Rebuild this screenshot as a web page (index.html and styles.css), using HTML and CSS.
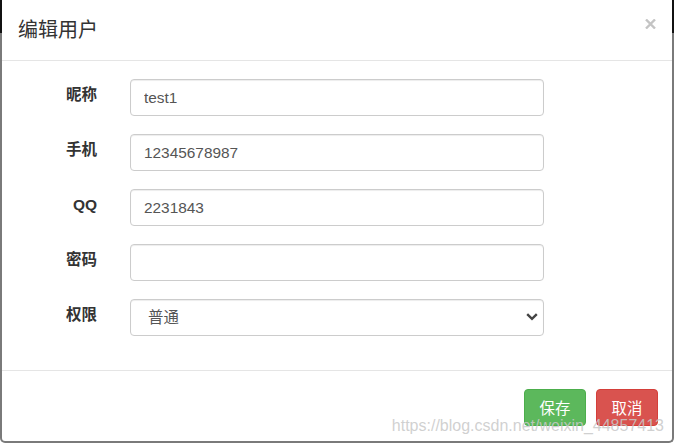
FILE: index.html
```html
<!DOCTYPE html>
<html lang="zh-CN">
<head>
<meta charset="utf-8">
<title>编辑用户</title>
<link rel="stylesheet" href="styles.css">
</head>
<body>
<div class="modal">
  <div class="modal-header">
    <h4 class="modal-title">编辑用户</h4>
    <span class="close" aria-label="Close">
      <svg width="11" height="10" viewBox="0 0 11 10"><path d="M1 0.5 L10 9.5 M10 0.5 L1 9.5" stroke="#c4c4c4" stroke-width="2.4" fill="none"/></svg>
    </span>
  </div>
  <form class="modal-body">
    <label class="label">昵称</label>
    <input class="control" type="text" value="test1">
    <label class="label">手机</label>
    <input class="control" type="text" value="12345678987">
    <label class="label">QQ</label>
    <input class="control" type="text" value="2231843">
    <label class="label">密码</label>
    <input class="control" type="password" value="">
    <label class="label">权限</label>
    <div class="select-wrap">
      <select class="control select">
        <option>普通</option>
        <option>管理员</option>
      </select>
      <svg class="chevron" width="12" height="8" viewBox="0 0 12 8"><path d="M1.2 1.2 L6 5.8 L10.8 1.2" stroke="#444" stroke-width="2.4" fill="none"/></svg>
    </div>
  </form>
  <div class="modal-footer">
    <button class="btn btn-success" type="button">保存</button>
    <button class="btn btn-danger" type="button">取消</button>
  </div>
  <div class="watermark">https://blog.csdn.net/weixin_44857413</div>
</div>
</body>
</html>
```

FILE: styles.css
```css
html, body {
  margin: 0;
  padding: 0;
  background: #fff;
}

body {
  width: 677px;
  height: 444px;
  overflow: hidden;
  font-family: "Liberation Sans", "Noto Sans CJK SC", sans-serif;
  color: #333;
}

.modal {
  position: relative;
  box-sizing: border-box;
  width: 674px;
  height: 443px;
  background: #fff;
  border: 2px solid #7a7a7a;
  border-top: none;
  border-radius: 0 0 5px 5px;
  display: flex;
  flex-direction: column;
}

.modal::before,
.modal::after {
  content: "";
  position: absolute;
  top: 0;
  width: 2px;
  height: 33px;
  background: #111;
}

.modal::before { left: -2px; }
.modal::after { right: -2px; }

.modal-header {
  height: 60px;
  border-bottom: 1px solid #e5e5e5;
  display: flex;
  align-items: center;
  justify-content: space-between;
  padding: 0 16px;
}

.modal-title {
  margin: 0;
  font-family: "Noto Sans CJK SC", sans-serif;
  font-weight: normal;
  font-size: 20px;
  line-height: 28px;
  color: #333;
  padding-bottom: 2px;
}

.close {
  display: flex;
  margin-bottom: 12px;
}

.modal-body {
  margin: 0;
  padding: 18px 0 34px 0;
  display: grid;
  grid-template-columns: 95px 414px;
  column-gap: 33px;
  row-gap: 18px;
  align-items: center;
}

.label {
  text-align: right;
  font-weight: bold;
  font-size: 15.5px;
  line-height: 22px;
  color: #333;
  padding-bottom: 5px;
}

.control {
  box-sizing: border-box;
  width: 414px;
  height: 37px;
  margin: 0;
  padding: 0 13px;
  border: 1px solid #ccc;
  border-radius: 4px;
  background: #fff;
  box-shadow: inset 0 1px 1px rgba(0, 0, 0, 0.075);
  font-family: "Liberation Sans", "Noto Sans CJK SC", sans-serif;
  font-size: 15.4px;
  color: #555;
  outline: none;
}

.select-wrap {
  position: relative;
  display: flex;
}

.select {
  appearance: none;
  -webkit-appearance: none;
  padding-left: 17px;
}

.chevron {
  position: absolute;
  right: 6px;
  top: 14px;
}

.modal-footer {
  flex: 1;
  border-top: 1px solid #e5e5e5;
  display: flex;
  justify-content: flex-end;
  align-items: flex-start;
  gap: 10px;
  padding: 18px 14px 0 0;
}

.btn {
  box-sizing: border-box;
  height: 37px;
  width: 62px;
  padding: 0;
  border: 1px solid transparent;
  border-radius: 4px;
  font-family: "Noto Sans CJK SC", sans-serif;
  font-size: 15.4px;
  color: #fff;
  line-height: 35px;
}

.btn-success {
  background: #5cb85c;
  border-color: #4cae4c;
}

.btn-danger {
  background: #d9534f;
  border-color: #d43f3a;
}

.watermark {
  position: absolute;
  right: 8px;
  top: 418px;
  font-family: "Liberation Sans", sans-serif;
  font-size: 16px;
  line-height: 16px;
  color: rgba(200, 200, 200, 0.85);
  white-space: nowrap;
  pointer-events: none;
}
```
